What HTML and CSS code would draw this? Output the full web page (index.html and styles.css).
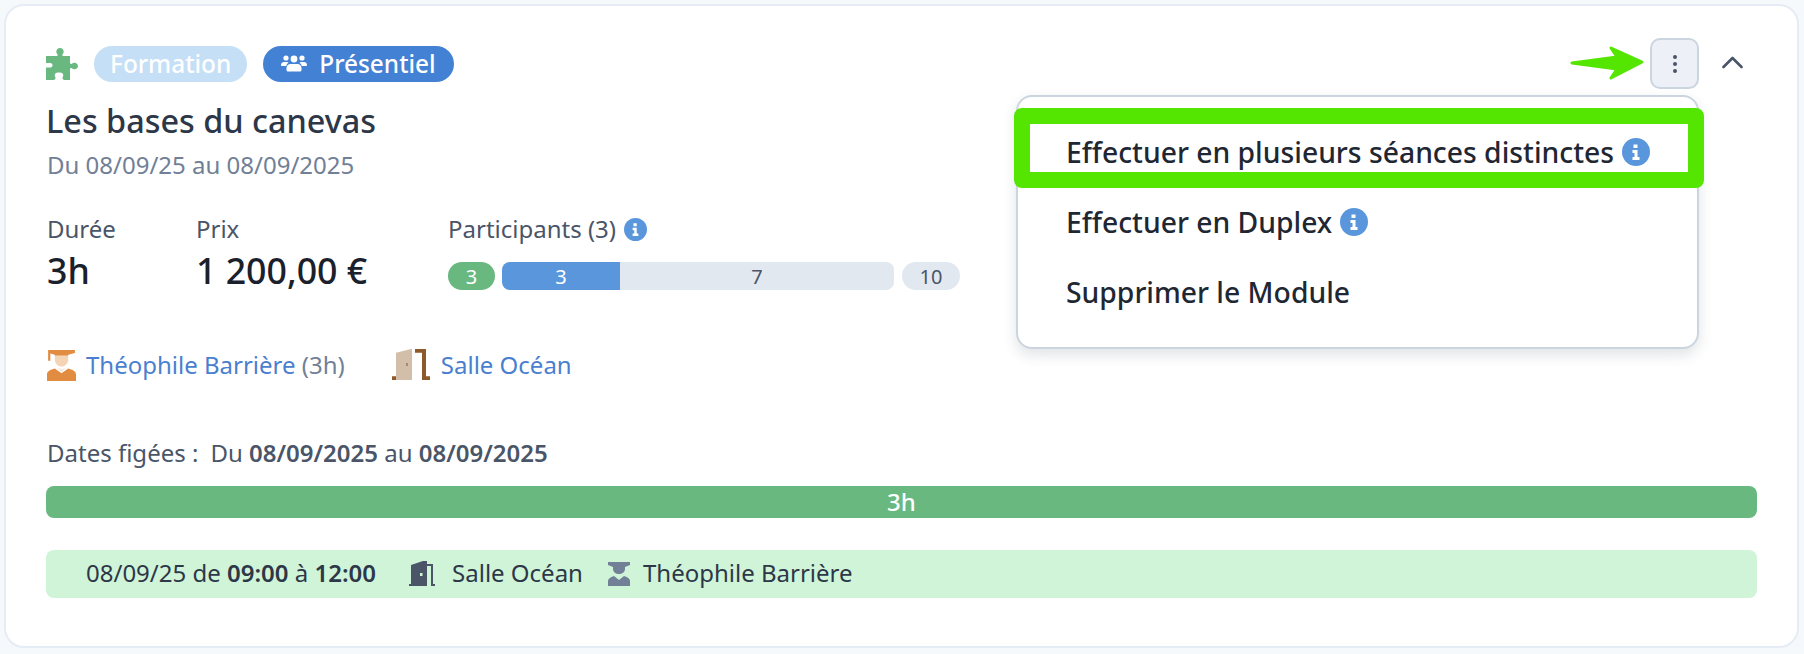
FILE: index.html
```html
<!DOCTYPE html>
<html lang="fr">
<head>
<meta charset="utf-8">
<title>Module</title>
<link rel="stylesheet" href="styles.css">
</head>
<body>
<main class="card">
  <header class="head">
    <div class="tags">
      <svg class="puzzle" viewBox="0 0 32 32"><path fill="#68b880" d="M0 8h10.500c1 0 1.500-.8 1-1.600-.5-.8-1.200-1.400-1.200-2.700C10.300 1.500 12 0 14 0s3.700 1.500 3.700 3.700c0 1.300-.7 1.900-1.200 2.700-.5.800 0 1.600 1 1.600H24v6.500c0 1 .8 1.800 1.800 1.200.8-.5 1.500-1 2.500-1 2 0 3.700 1.300 3.700 3.300s-1.700 3.300-3.700 3.300c-1 0-1.700-.5-2.500-1-1-.6-1.800.2-1.800 1.200V32h-5.500c-1 0-2-.8-2-2 0-1 .8-1.800.8-2.800 0-1.500-1.300-2.700-3.300-2.700h-2c-2 0-3.300 1.200-3.300 2.700 0 1 .8 1.800.8 2.800 0 1.200-1 2-2 2H0V19.500h4c1.300 0 2.500-.9 2.500-2.300S5.300 15 4 15H0z"/></svg>
      <span class="tag tag-light">Formation</span>
      <span class="tag tag-blue">
        <svg class="users" viewBox="0 0 26 20"><g fill="#fff"><circle cx="5" cy="4" r="2.600"/><circle cx="21" cy="4" r="2.600"/><circle cx="13" cy="5" r="3.400"/><path d="M0 11c0-2 1.500-3 3-3h3c.6 0 1.200.2 1.600.6C6.300 9.600 5.500 11 5.300 12H1c-.6 0-1-.4-1-1zM26 11c0-2-1.500-3-3-3h-3c-.6 0-1.200.2-1.600.6 1.300 1 2.100 2.400 2.300 3.400H25c.6 0 1-.4 1-1zM9.500 10h7c2.300 0 4 1.700 4 4v2c0 .8-.6 1.500-1.500 1.500H7c-.9 0-1.500-.7-1.500-1.500v-2c0-2.300 1.700-4 4-4z"/></g></svg>
        Présentiel
      </span>
    </div>
    <div class="actions">
      <svg class="arrow" viewBox="0 0 74 36"><path fill="#54e600" stroke="#54e600" stroke-width="3" stroke-linejoin="round" d="M2 18l45-6-6-9 31 14-31 16 6-9z"/></svg>
      <button class="more" type="button" aria-label="Actions">
        <svg viewBox="0 0 6 20" class="dots"><g fill="#4a5568"><circle cx="3" cy="3" r="2"/><circle cx="3" cy="10" r="2"/><circle cx="3" cy="17" r="2"/></g></svg>
      </button>
      <svg class="chev" viewBox="0 0 21 14"><path fill="none" stroke="#4a5568" stroke-width="2.600" stroke-linecap="round" stroke-linejoin="round" d="M1.500 12l9-9 9 9"/></svg>
    </div>
  </header>

  <nav class="menu">
    <div class="hl"></div>
    <div class="item">Effectuer en plusieurs séances distinctes <svg class="info" viewBox="0 0 28 28"><use href="#i"/></svg></div>
    <div class="item">Effectuer en Duplex <svg class="info" viewBox="0 0 28 28"><use href="#i"/></svg></div>
    <div class="item">Supprimer le Module</div>
  </nav>

  <h1 class="title">Les bases du canevas</h1>
  <p class="range">Du 08/09/25 au 08/09/2025</p>

  <section class="stats">
    <div class="stat stat-d"><div class="lbl">Durée</div><div class="val">3h</div></div>
    <div class="stat stat-p"><div class="lbl">Prix</div><div class="val">1 200,00 €</div></div>
    <div class="stat">
      <div class="lbl">Participants (3) <svg class="info info-s" viewBox="0 0 28 28"><use href="#i"/></svg></div>
      <div class="bars">
        <span class="pill pill-g">3</span>
        <div class="track"><span class="fill">3</span><span class="rest">7</span></div>
        <span class="pill pill-t">10</span>
      </div>
    </div>
  </section>

  <section class="people">
    <span class="who">
      <svg class="ic-t" viewBox="0 0 26 32" preserveAspectRatio="none"><path fill="#e28c42" d="M1 0h24v3l-6 2v1H7V5L3 3.500V11H1z"/><path fill="#f5d4b6" d="M7 6h12v4c0 4-3 7-6 7s-6-3-6-7z"/><path fill="#e28c42" d="M0 32v-7c0-3 3-5 7-6l6 5 6-5c4 1 7 3 7 6v7z"/><path fill="#f5e6d8" d="M9 18l4 5 4-5-4 2z"/></svg>
      <span><a>Théophile Barrière</a> <span class="mut">(3h)</span></span>
    </span>
    <span class="who">
      <svg class="ic-d" viewBox="0 0 38 34" preserveAspectRatio="none"><path fill="#8d5a2b" d="M0 29h4v4H0zM23 0h11v29h4v4h-8V4h-7z"/><path fill="#d3bfa9" d="M4 33V4l15-4h1v33z"/><path fill="#a58a70" d="M14 15h2v3h-2z"/></svg>
      <a>Salle Océan</a>
    </span>
  </section>

  <p class="frozen"><span class="fz">Dates figées :</span>Du <b>08/09/2025</b> au <b>08/09/2025</b></p>
  <div class="bar">3h</div>
  <div class="slot">
    <span class="when">08/09/25 de <b>09:00</b> à <b>12:00</b></span>
    <svg class="ic-sd" viewBox="0 0 26 26"><path fill="#4a5568" fill-rule="evenodd" d="M0 25v-2h2V4l12-4h4v25zM11 12v3h2.500v-3z"/><path fill="#4a5568" d="M18 3h6v20h2v2h-4V5h-4z"/></svg>
    <span class="sl">Salle Océan</span>
    <svg class="ic-st" viewBox="0 0 22 24"><path fill="#718096" d="M0 0h22v3l-5 2v2c0 3-3 5-6 5S5 10 5 7V5L0 3zM0 24v-5c0-2 2-4 6-5l5 4 5-4c4 1 6 3 6 5v5z"/></svg>
    <span class="sl">Théophile Barrière</span>
  </div>
</main>
<svg width="0" height="0" class="defs"><symbol id="i" viewBox="0 0 28 28"><circle cx="14" cy="14" r="14" fill="#5a96dc"/><path fill="#fff" d="M11.500 6.500h4v3.500h-4zM10.500 12h5v7h2v3h-7v-3h2v-4h-2z"/></symbol></svg>
</body>
</html>
```
FILE: styles.css
```css
* { box-sizing: border-box; }
html, body { margin: 0; padding: 0; }
body {
  width: 1804px;
  height: 654px;
  background: #f6f9fc;
  font-family: "Noto Sans", "Open Sans", sans-serif;
  color: #2d3748;
  overflow: hidden;
}
.defs { position: absolute; }
.card {
  position: relative;
  margin: 4px 0 0 4px;
  width: 1795px;
  height: 644px;
  background: #fff;
  border: 2px solid #e6ecf5;
  border-radius: 20px;
  padding: 32px 40px 0 40px;
}
.head {
  display: flex;
  justify-content: space-between;
  align-items: center;
  height: 51px;
}
.tags { display: flex; align-items: center; gap: 16px; }
.puzzle { width: 32px; height: 32px; }
.tag {
  display: inline-flex;
  align-items: center;
  height: 36px;
  border-radius: 18px;
  color: #fff;
  font-size: 24.4px;
  font-weight: 500;
  padding: 0 16px;
}
.tag-light { background: #c5dff6; }
.tag-blue { background: #4281d4; gap: 12px; padding: 0 18px; }
.users { width: 26px; height: 20px; }
.actions { display: flex; align-items: center; position: relative; margin-right: 14px; }
.arrow { position: absolute; left: -80px; top: 7px; width: 74px; height: 36px; }
.more {
  width: 49px;
  height: 51px;
  padding: 0;
  background: #edf1f7;
  border: 2px solid #cbd5e0;
  border-radius: 10px;
  display: flex;
  align-items: center;
  justify-content: center;
}
.dots { width: 6px; height: 20px; }
.chev { width: 21px; height: 14px; margin: 0 0 4px 23px; }

.menu {
  position: absolute;
  left: 1010px;
  top: 89px;
  width: 683px;
  height: 254px;
  background: #fff;
  border: 2px solid #cbd5e0;
  border-radius: 16px;
  box-shadow: 0 6px 14px rgba(45, 55, 72, .14);
  padding: 20px 0 0 48px;
  z-index: 2;
}
.hl {
  position: absolute;
  left: -4px;
  top: 11px;
  width: 690px;
  height: 80px;
  border: 16px solid #54e600;
  border-radius: 8px;
}
.item {
  display: flex;
  align-items: center;
  gap: 8px;
  height: 70px;
  font-size: 28.3px;
  font-weight: 500;
  color: #1f2733;
}
.info { width: 28px; height: 28px; }

.title {
  margin: 11px 0 0;
  font-size: 32.4px;
  font-weight: 500;
  line-height: 40px;
  color: #2d3748;
}
.range {
  margin: 11px 0 0;
  padding-left: 1px;
  font-size: 24px;
  line-height: 28px;
  color: #718096;
}
.stats { display: flex; margin-top: 36px; padding-left: 1px; }
.stat-d { width: 149px; }
.stat-p { width: 252px; }
.lbl {
  display: flex;
  align-items: center;
  gap: 8px;
  font-size: 24px;
  line-height: 28px;
  color: #4a5568;
}
.val {
  font-size: 35.7px;
  font-weight: 500;
  line-height: 46px;
  margin-top: 4px;
  color: #1a202c;
}
.info-s { width: 23px; height: 23px; }
.bars { display: flex; align-items: center; margin-top: 19px; }
.pill {
  display: flex;
  align-items: center;
  justify-content: center;
  height: 28px;
  border-radius: 14px;
  font-size: 20px;
}
.pill-g { width: 47px; background: #68b880; color: #fff; }
.pill-t { width: 58px; background: #e2e8f0; color: #4a5568; margin-left: 8px; }
.track { display: flex; margin-left: 7px; width: 392px; height: 28px; border-radius: 8px; overflow: hidden; background: #e2e8f0; }
.fill { width: 118px; background: #5a96dc; color: #fff; display: flex; align-items: center; justify-content: center; font-size: 20px; }
.rest { flex: 1; color: #4a5568; display: flex; align-items: center; justify-content: center; font-size: 20px; }

.people { display: flex; align-items: center; margin-top: 55px; padding-left: 1px; }
.who { display: flex; align-items: center; font-size: 24px; line-height: 34px; }
.who + .who { margin-left: 47px; }
.who a { color: #4a7fd0; }
.mut { color: #718096; }
.ic-t { width: 29px; height: 31px; margin-right: 10px; }
.ic-d { width: 38px; height: 32px; margin-right: 11px; }

.frozen { margin: 57px 0 0; padding-left: 1px; font-size: 24px; line-height: 28px; color: #4a5568; }
.fz { margin-right: 12px; }
.frozen b { font-weight: 600; }
.bar {
  margin-top: 19px;
  height: 32px;
  border-radius: 8px;
  background: #68b880;
  color: #fff;
  font-size: 24px;
  font-weight: 500;
  line-height: 32px;
  text-align: center;
}
.slot {
  display: flex;
  align-items: center;
  margin-top: 32px;
  height: 48px;
  border-radius: 8px;
  background: #cff4d8;
  padding-left: 40px;
  font-size: 24px;
  color: #2d3748;
}
.when { margin: 0 33px 3px 0; color: #2d3748; }
.when b { font-weight: 600; }
.sl { margin-bottom: 3px; }
.ic-sd { width: 26px; height: 26px; margin-right: 17px; }
.ic-st { width: 22px; height: 24px; margin: 0 13px 0 25px; }
```
